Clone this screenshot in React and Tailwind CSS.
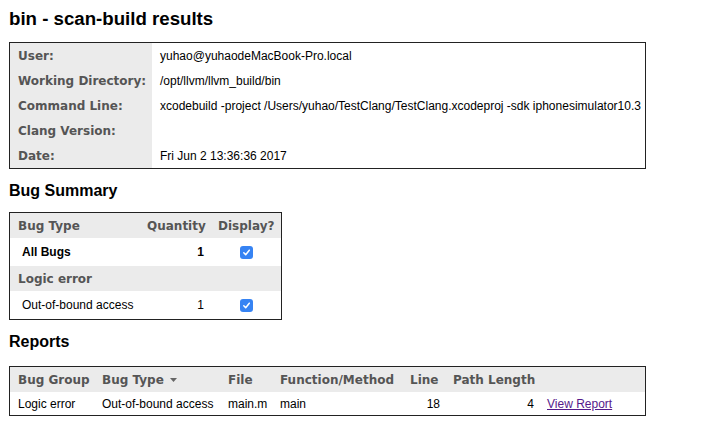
const HF = "font-['DejaVu_Sans',Verdana,sans-serif]";

function Check() {
  return (
    <span className="inline-flex h-[13px] w-[13px] items-center justify-center rounded-[3px] bg-[#3683f3] align-middle">
      <svg width="9" height="9" viewBox="0 0 9 9" fill="none">
        <path d="M1.8 4.8 L3.7 6.7 L7.3 2.2" stroke="white" strokeWidth="1.5" strokeLinecap="round" strokeLinejoin="round" />
      </svg>
    </span>
  );
}

const info = [
  ["User:", "yuhao@yuhaodeMacBook-Pro.local"],
  ["Working Directory:", "/opt/llvm/llvm_build/bin"],
  ["Command Line:", "xcodebuild -project /Users/yuhao/TestClang/TestClang.xcodeproj -sdk iphonesimulator10.3"],
  ["Clang Version:", ""],
  ["Date:", "Fri Jun 2 13:36:36 2017"],
];

export default function App() {
  const th = `${HF} bg-[#ebebeb] pl-2 pr-[5px] py-0 text-left font-bold text-[#555555] whitespace-nowrap`;
  const td = "pl-2 pr-[5px] py-0 whitespace-nowrap";
  return (
    <div className="min-h-[444px] w-[718px] bg-white pl-[9px] pt-[8px] font-['Liberation_Sans',Arial,sans-serif] text-[12px] text-black">
      <h1 className="mb-[12px] text-[18.67px] font-bold leading-[22px]">bin - scan-build results</h1>

      <table className="w-[637px] table-fixed border-separate border-spacing-0 border border-[#222]">
        <colgroup>
          <col className="w-[142px]" />
          <col />
        </colgroup>
        <tbody>
          {info.map(([k, v]) => (
            <tr key={k}>
              <th className={`${th} h-[25px]`}>{k}</th>
              <td className={`${td} h-[25px]`}>{v}</td>
            </tr>
          ))}
        </tbody>
      </table>

      <h2 className="mb-[12px] mt-[13px] text-[16px] font-bold leading-[18px]">Bug Summary</h2>

      <table className="w-[273px] table-fixed border-separate border-spacing-0 border border-[#222]">
        <colgroup>
          <col className="w-[129px]" />
          <col className="w-[71px]" />
          <col className="w-[71px]" />
        </colgroup>
        <thead>
          <tr>
            <th className={`${th} h-[25px]`}>Bug Type</th>
            <th className={`${th} h-[25px]`}>Quantity</th>
            <th className={`${th} h-[25px]`}>Display?</th>
          </tr>
        </thead>
        <tbody>
          <tr>
            <td className={`${td} h-[28px] pl-[12px] font-bold`}>All Bugs</td>
            <td className={`${td} h-[28px] pr-[6px] text-right font-bold`}>1</td>
            <td className="h-[28px] p-0 pl-[1px] text-center">
              <Check />
            </td>
          </tr>
          <tr>
            <th colSpan={3} className={`${th} h-[25px]`}>Logic error</th>
          </tr>
          <tr>
            <td className={`${td} h-[28px] pl-[12px]`}>Out-of-bound access</td>
            <td className={`${td} h-[28px] pr-[6px] text-right`}>1</td>
            <td className="h-[28px] p-0 pl-[1px] text-center">
              <Check />
            </td>
          </tr>
        </tbody>
      </table>

      <h2 className="mb-[15px] mt-[13px] text-[16px] font-bold leading-[18px]">Reports</h2>

      <table className="w-[637px] table-fixed border-separate border-spacing-0 border border-[#222]">
        <colgroup>
          <col className="w-[84px]" />
          <col className="w-[126px]" />
          <col className="w-[52px]" />
          <col className="w-[130px]" />
          <col className="w-[43px]" />
          <col className="w-[94px]" />
          <col />
        </colgroup>
        <thead>
          <tr>
            <th className={`${th} h-[25px]`}>Bug Group</th>
            <th className={`${th} h-[25px]`}>
              Bug Type
              <svg className="ml-[6px] inline-block align-middle" width="7" height="4" viewBox="0 0 7 4">
                <polygon points="0,0 7,0 3.5,4" fill="#666666" />
              </svg>
            </th>
            <th className={`${th} h-[25px]`}>File</th>
            <th className={`${th} h-[25px]`}>Function/Method</th>
            <th className={`${th} h-[25px]`}>Line</th>
            <th className={`${th} h-[25px]`}>Path Length</th>
            <th className={`${th} h-[25px]`}></th>
          </tr>
        </thead>
        <tbody>
          <tr>
            <td className={`${td} h-[23px]`}>Logic error</td>
            <td className={`${td} h-[23px]`}>Out-of-bound access</td>
            <td className={`${td} h-[23px]`}>main.m</td>
            <td className={`${td} h-[23px]`}>main</td>
            <td className={`${td} h-[23px] text-right`}>18</td>
            <td className={`${td} h-[23px] text-right`}>4</td>
            <td className={`${td} h-[23px]`}>
              <a href="#" className="text-[#551a8b] underline">View Report</a>
            </td>
          </tr>
        </tbody>
      </table>
    </div>
  );
}
